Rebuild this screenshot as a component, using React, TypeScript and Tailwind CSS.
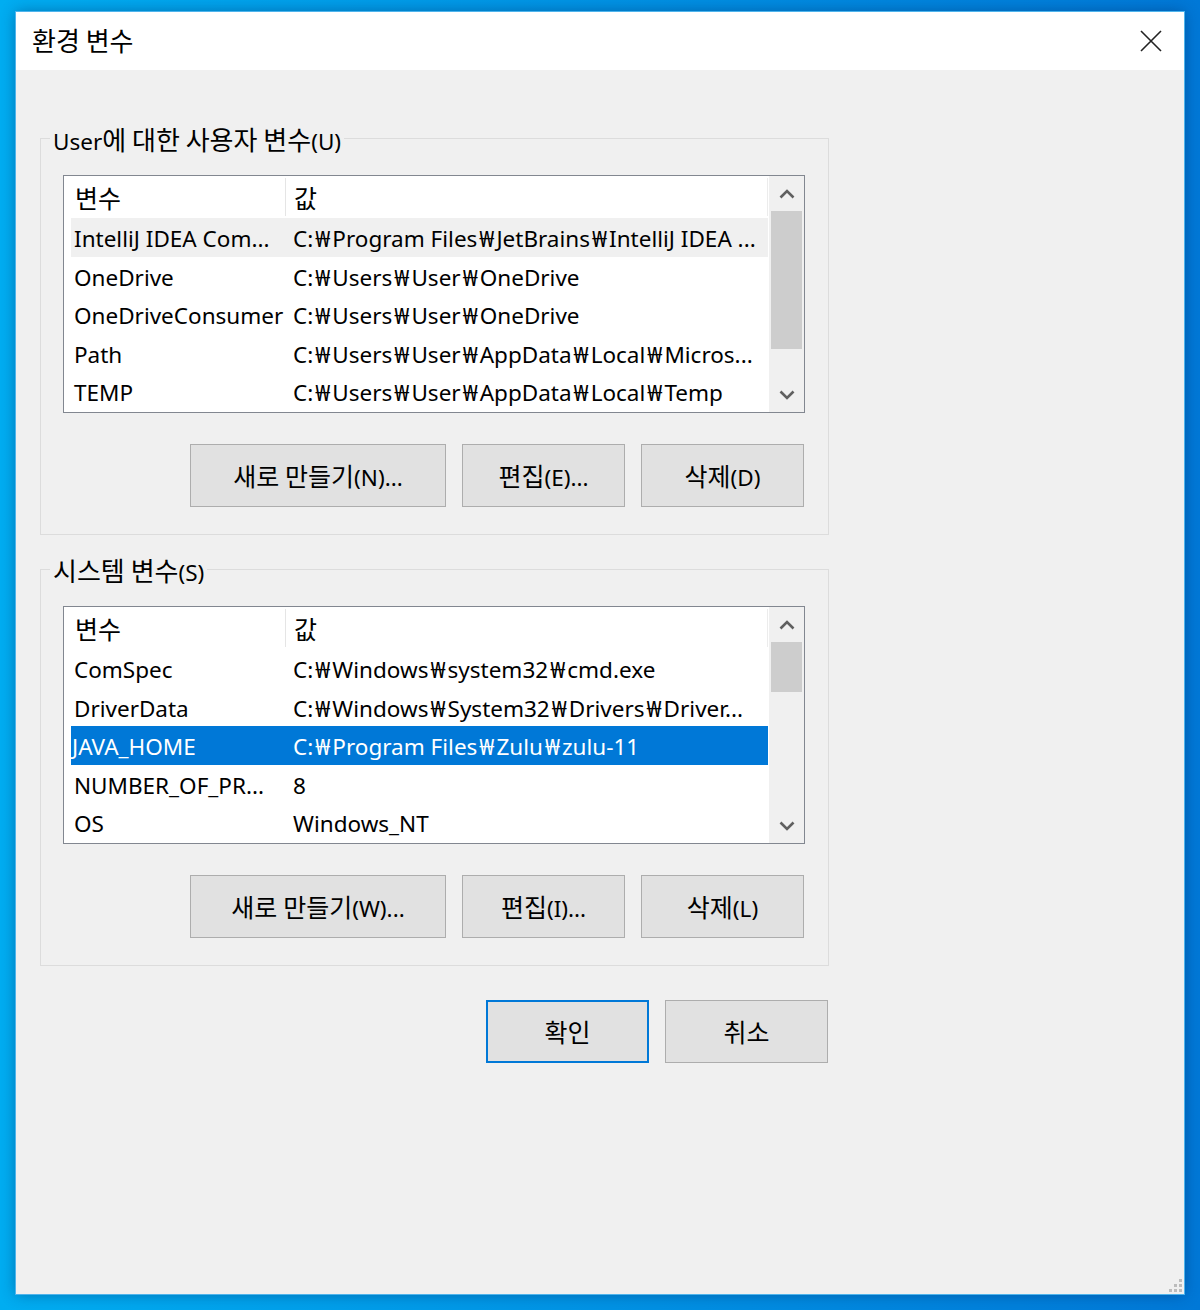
import React from "react";

const FONT = { fontFamily: '"Noto Sans", "Noto Sans CJK KR", sans-serif' };

// Korean glyphs in the reference (Malgun Gothic) are larger than Noto's, and the won sign wider
function T({ s, k = "text-[25px]" }: { s: string; k?: string }) {
  const parts = s.split(/([\uAC00-\uD7A3]+|₩)/).filter((p) => p !== "");
  return (
    <span className="whitespace-pre">
      {parts.map((p, i) =>
        p === "₩" ? (
          <span key={i} className="px-[2px]">
            ₩
          </span>
        ) : /[\uAC00-\uD7A3]/.test(p) ? (
          <span key={i} className={k}>
            {p}
          </span>
        ) : (
          <React.Fragment key={i}>{p}</React.Fragment>
        )
      )}
    </span>
  );
}

interface Row {
  name: string;
  value: string;
}

const userRows: Row[] = [
  { name: "IntelliJ IDEA Com...", value: "C:₩Program Files₩JetBrains₩IntelliJ IDEA ..." },
  { name: "OneDrive", value: "C:₩Users₩User₩OneDrive" },
  { name: "OneDriveConsumer", value: "C:₩Users₩User₩OneDrive" },
  { name: "Path", value: "C:₩Users₩User₩AppData₩Local₩Micros..." },
  { name: "TEMP", value: "C:₩Users₩User₩AppData₩Local₩Temp" },
];

const systemRows: Row[] = [
  { name: "ComSpec", value: "C:₩Windows₩system32₩cmd.exe" },
  { name: "DriverData", value: "C:₩Windows₩System32₩Drivers₩Driver..." },
  { name: "JAVA_HOME", value: "C:₩Program Files₩Zulu₩zulu-11" },
  { name: "NUMBER_OF_PR...", value: "8" },
  { name: "OS", value: "Windows_NT" },
];

function Chevron({ up }: { up?: boolean }) {
  return (
    <svg width="16" height="10" viewBox="0 0 16 10">
      <polyline
        points={up ? "1.5,8.5 8,2 14.5,8.5" : "1.5,1.5 8,8 14.5,1.5"}
        fill="none"
        stroke="#606060"
        strokeWidth="2.6"
      />
    </svg>
  );
}

function VarList({
  rows,
  hover,
  selected,
  thumb,
}: {
  rows: Row[];
  hover?: number;
  selected?: number;
  thumb: number;
}) {
  return (
    <div className="flex w-[742px] h-[238px] border border-[#828790] bg-white">
      {/* list body */}
      <div className="flex-1 flex flex-col">
        <div className="flex h-[42px] items-stretch">
          <div className="w-[221px] flex items-center pl-[11px] pt-[3px]">
            <T s="변수" />
          </div>
          <div className="w-px bg-[#e5e5e5] my-[2px]" />
          <div className="flex-1 flex items-center pl-[8px] pt-[3px]">
            <T s="값" />
          </div>
          <div className="w-px bg-[#ececec] my-[2px] mr-[1px]" />
        </div>
        <div className="pl-[7px] pr-[1px]">
          {rows.map((r, i) => (
            <div
              key={r.name}
              className={
                "flex h-[38.6px] items-center whitespace-nowrap pt-[3px] " +
                (i === selected
                  ? "bg-[#0078d7] text-white"
                  : i === hover
                  ? "bg-[#f0f0f0]"
                  : "")
              }
            >
              <div className={"w-[214px] overflow-hidden " + (i === selected ? "pl-[1px]" : "pl-[3px]")}>
                {r.name}
              </div>
              <div className="flex-1 overflow-hidden pl-[8px]">
                <T s={r.value} />
              </div>
            </div>
          ))}
        </div>
      </div>
      {/* scrollbar */}
      <div className="w-[35px] bg-[#f0f0f0] flex flex-col">
        <div className="h-[35px] flex items-center justify-center">
          <Chevron up />
        </div>
        <div className="flex-1 px-[2px]">
          <div className="bg-[#cdcdcd]" style={{ height: thumb }} />
        </div>
        <div className="h-[35px] flex items-center justify-center">
          <Chevron />
        </div>
      </div>
    </div>
  );
}

function Btn({ children, w = "w-[163px]", primary }: { children: React.ReactNode; w?: string; primary?: boolean }) {
  return (
    <div
      className={
        "h-[63px] flex items-center justify-center bg-[#e1e1e1] pt-[3px] " +
        w +
        (primary ? " border-2 border-[#0078d7]" : " border border-[#adadad]")
      }
    >
      {children}
    </div>
  );
}

function Group({
  label,
  rows,
  hover,
  selected,
  thumb,
  buttons,
}: {
  label: string;
  rows: Row[];
  hover?: number;
  selected?: number;
  thumb: number;
  buttons: [string, string, string];
}) {
  return (
    <div className="relative w-[789px] h-[397px] border border-[#dcdcdc] pl-[22px] pt-[36px]">
      <span className="absolute left-[9px] top-[-15px] px-[3px] bg-[#f0f0f0] leading-[32px]">
        <T s={label} k="text-[26px]" />
      </span>
      <VarList rows={rows} hover={hover} selected={selected} thumb={thumb} />
      <div className="w-[742px] flex justify-end gap-[16px] pr-[1px] mt-[31px]">
        <Btn w="w-[256px]">
          <T s={buttons[0]} />
        </Btn>
        <Btn>
          <T s={buttons[1]} />
        </Btn>
        <Btn>
          <T s={buttons[2]} />
        </Btn>
      </div>
    </div>
  );
}

export default function App() {
  return (
    <div
      className="w-[1200px] h-[1310px] overflow-hidden bg-gradient-to-r from-[#00adf1] to-[#0078d7] pt-[12px] pl-[16px] text-[22.5px] text-black"
      style={FONT}
    >
      <div className="w-[1168px] h-[1282px] bg-[#f0f0f0] flex flex-col shadow-[0_0_14px_rgba(0,40,90,0.45)] outline outline-1 outline-[#4fb4ec]">
        {/* title bar */}
        <div className="h-[58px] bg-white flex items-center justify-between pl-[16px] pr-[22px]">
          <span className="pt-[1px]">
            <T s="환경 변수" k="text-[26px]" />
          </span>
          <svg width="22" height="22" viewBox="0 0 22 22">
            <path d="M1 1 L21 21 M21 1 L1 21" stroke="#222" strokeWidth="1.6" />
          </svg>
        </div>

        {/* content */}
        <div className="flex-1 relative pl-[24px] pt-[68px]">
          <Group
            label="User에 대한 사용자 변수(U)"
            rows={userRows}
            hover={0}
            thumb={138}
            buttons={["새로 만들기(N)...", "편집(E)...", "삭제(D)"]}
          />
          <div className="mt-[34px]">
            <Group
              label="시스템 변수(S)"
              rows={systemRows}
              selected={2}
              thumb={50}
              buttons={["새로 만들기(W)...", "편집(I)...", "삭제(L)"]}
            />
          </div>
          <div className="w-[789px] flex justify-end gap-[16px] pr-[1px] mt-[34px]">
            <Btn primary>
              <T s="확인" />
            </Btn>
            <Btn>
              <T s="취소" />
            </Btn>
          </div>

          {/* resize grip */}
          <div className="absolute right-[2px] bottom-[2px] grid grid-cols-3 gap-[2px]">
            <span className="w-[3px] h-[3px]" />
            <span className="w-[3px] h-[3px]" />
            <span className="w-[3px] h-[3px] bg-[#bcbcbc]" />
            <span className="w-[3px] h-[3px]" />
            <span className="w-[3px] h-[3px] bg-[#bcbcbc]" />
            <span className="w-[3px] h-[3px] bg-[#bcbcbc]" />
            <span className="w-[3px] h-[3px] bg-[#bcbcbc]" />
            <span className="w-[3px] h-[3px] bg-[#bcbcbc]" />
            <span className="w-[3px] h-[3px] bg-[#bcbcbc]" />
          </div>
        </div>
      </div>
    </div>
  );
}
